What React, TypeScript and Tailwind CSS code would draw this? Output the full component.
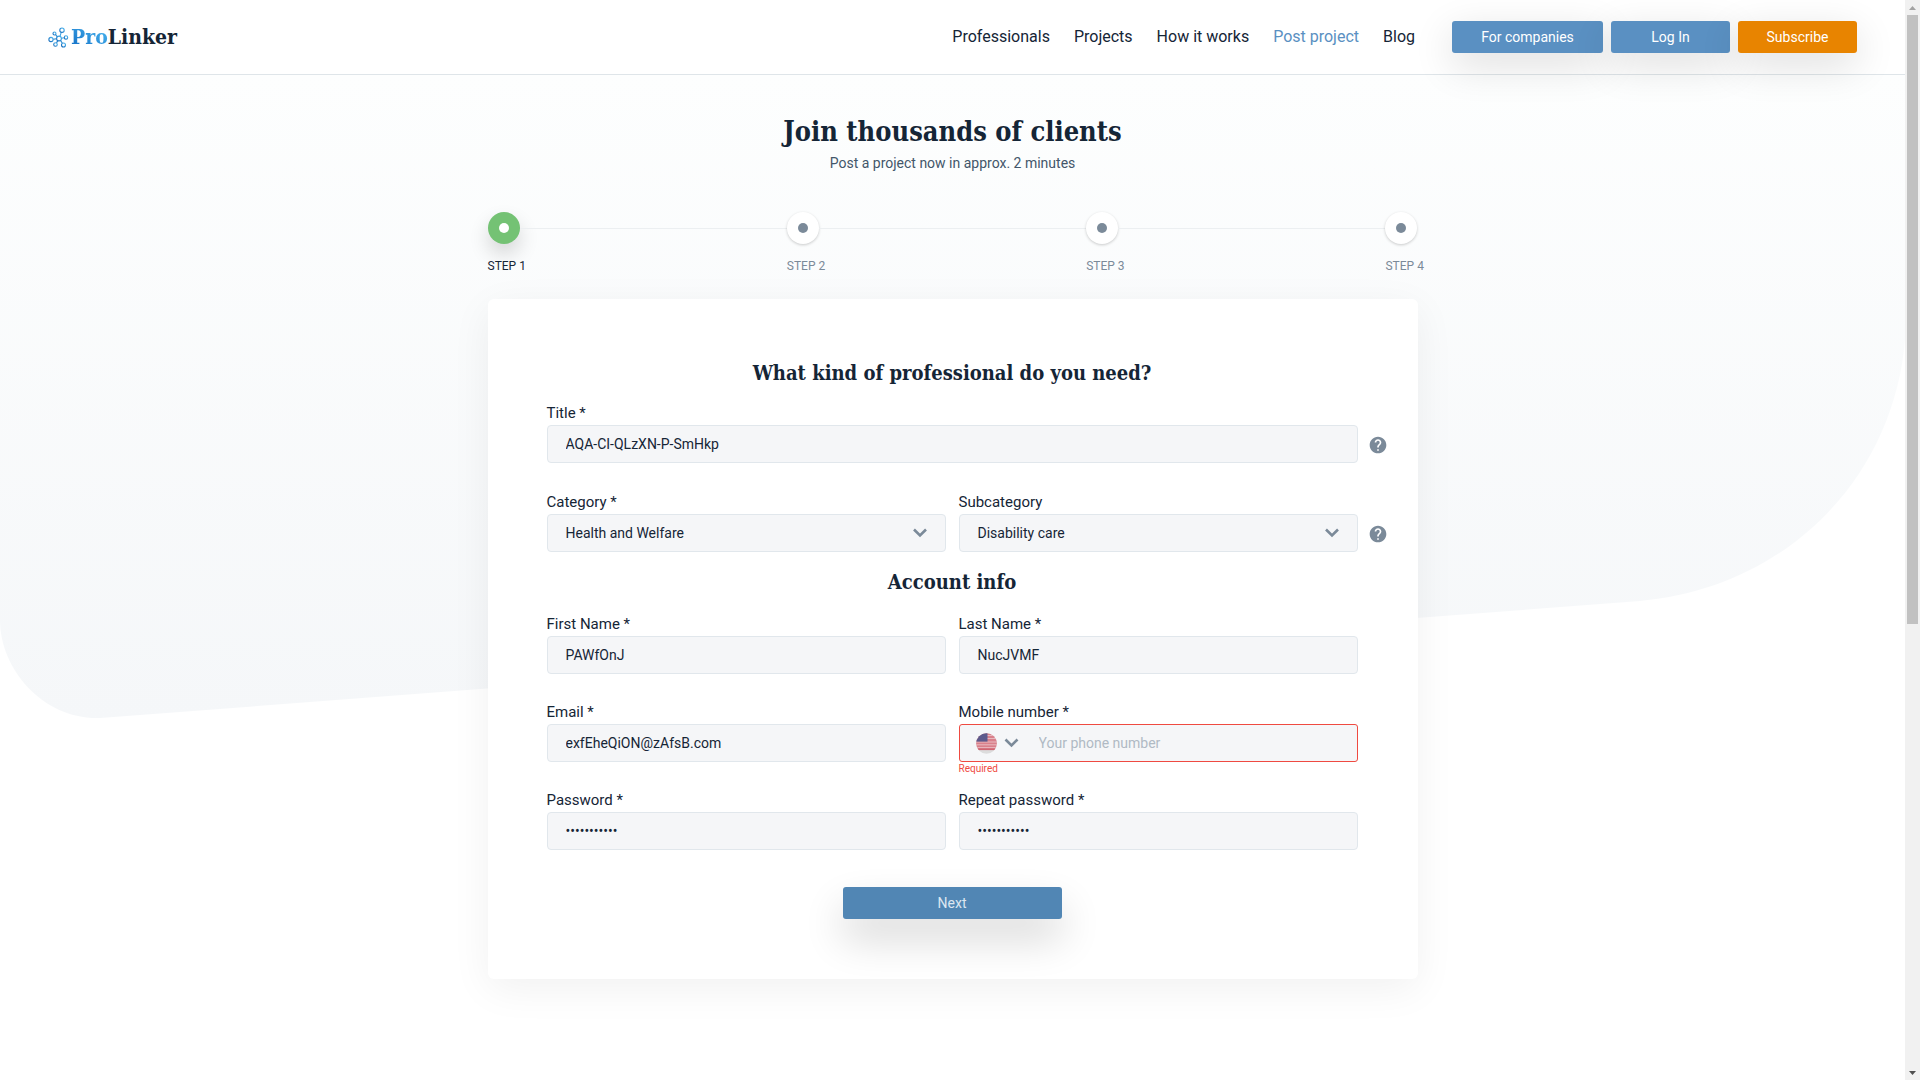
import { useState, type InputHTMLAttributes, type ReactNode } from "react";
import { MdHelp } from "react-icons/md";

const NAV_LINKS = ["Professionals", "Projects", "How it works", "Post project", "Blog"];
const ACTIVE_LINK = "Post project";
const STEPS = ["STEP 1", "STEP 2", "STEP 3", "STEP 4"];

function LogoMark() {
  const nodes = [
    [3, 12.5, 2.1],
    [6.5, 6.5, 1.5],
    [14, 3.2, 2.2],
    [18, 10.5, 1.7],
    [15.5, 18, 2],
    [7.5, 17.5, 1.8],
  ];
  return (
    <svg viewBox="0 0 21 21" className="h-[21px] w-[21px]" fill="none" aria-hidden="true">
      <defs>
        <linearGradient id="mark" x1="0" y1="1" x2="1" y2="0">
          <stop offset="0" stopColor="#1267b8" />
          <stop offset="1" stopColor="#4db8f2" />
        </linearGradient>
      </defs>
      <g stroke="url(#mark)" strokeWidth="1.1">
        <circle cx="11" cy="11.5" r="2.4" />
        <path d="M8.6 11.8 5.1 12.2M9.4 9.8 7.6 7.6M12 9.3 13.2 5.3M13.4 11.2 16.3 10.8M12.5 13.4 14.4 16.3M9.9 13.6 8.4 15.9" />
        {nodes.map(([cx, cy, r]) => (
          <circle key={`${cx}-${cy}`} cx={cx} cy={cy} r={r} />
        ))}
      </g>
    </svg>
  );
}

function Chevron({ className }: { className: string }) {
  return (
    <svg viewBox="0 0 14 10" className={className} fill="none" stroke="#7b8a99" strokeWidth="2.6" aria-hidden="true">
      <path d="M1 1.5 7 7.5 13 1.5" />
    </svg>
  );
}

function UsFlag() {
  return (
    <svg viewBox="0 0 21 21" className="h-[21px] w-[21px]" aria-hidden="true">
      <clipPath id="disc">
        <circle cx="10.5" cy="10.5" r="10.3" />
      </clipPath>
      <g clipPath="url(#disc)">
        <rect width="21" height="21" fill="#dcdcdc" />
        <rect width="21" height="17" fill="#d9808b" />
        <path d="M11 2.5H21M11 5.5H21M0 9H21M0 11.8H21M0 14.6H21" stroke="#e9b9c0" strokeWidth="1" />
        <rect y="15.5" width="21" height="1.6" fill="#cf6472" />
        <rect width="11.5" height="8.6" fill="#5d5a8c" />
      </g>
    </svg>
  );
}

function Field({ id, label, error, aside, children }: { id: string; label: string; error?: string; aside?: ReactNode; children: ReactNode }) {
  return (
    <div className="min-w-0 flex-1">
      <label htmlFor={id} className="block text-[15px] leading-6">
        {label}
      </label>
      <div className="relative">
        {children}
        {aside}
      </div>
      {error && (
        <p id={`${id}-error`} className="-mb-3.5 text-[10px] leading-3.5 text-[#ef4a41]">
          {error}
        </p>
      )}
    </div>
  );
}

const BOX = "block h-[38px] w-full rounded-[4px] border border-[#e1e7ec] bg-[#f5f6f8] px-[18px] text-sm text-[#152536] outline-none";

function TextField({ id, label, aside, ...rest }: { id: string; label: string; aside?: ReactNode } & InputHTMLAttributes<HTMLInputElement>) {
  return (
    <Field id={id} label={label} aside={aside}>
      <input id={id} className={BOX} {...rest} />
    </Field>
  );
}

function SelectField({ id, label, options, aside }: { id: string; label: string; options: string[]; aside?: ReactNode }) {
  return (
    <Field id={id} label={label} aside={aside}>
      <select id={id} className={`${BOX} appearance-none`}>
        {options.map((o) => (
          <option key={o}>{o}</option>
        ))}
      </select>
      <span className="pointer-events-none absolute inset-y-0 right-[19px] flex items-center">
        <Chevron className="h-[10px] w-[14px]" />
      </span>
    </Field>
  );
}

function Help({ label }: { label: string }) {
  return (
    <button type="button" aria-label={label} className="absolute top-2.5 -right-[30px] text-xl text-[#7b8a99]">
      <MdHelp />
    </button>
  );
}

function Header() {
  return (
    <header className="flex h-[75px] items-center justify-between border-b border-[#dfe5e9] px-12">
      <a href="#home" className="flex items-center gap-0.5 font-['Roboto_Slab','DejaVu_Serif_Condensed','DejaVu_Serif',serif] text-[21px] leading-7 font-bold text-[#152536]">
        <LogoMark />
        <span>
          <span className="bg-linear-to-tr from-[#0f6cc4] to-[#4fbdf3] bg-clip-text text-transparent">Pro</span>
          Linker
        </span>
      </a>
      <div className="flex items-center gap-[37px]">
        <nav className="flex gap-6 text-base">
          {NAV_LINKS.map((link) => (
            <a key={link} href="#nav" className={link === ACTIVE_LINK ? "text-[#5a90c2]" : ""}>
              {link}
            </a>
          ))}
        </nav>
        <div className="flex gap-2 text-sm text-white">
          <button className="h-8 w-[151px] rounded-[3px] bg-[#5a90c2] shadow-[0_12px_40px_rgba(0,0,0,0.14)]">For companies</button>
          <button className="h-8 w-[119px] rounded-[3px] bg-[#5a90c2] shadow-[0_12px_40px_rgba(0,0,0,0.14)]">Log In</button>
          <button className="h-8 w-[119px] rounded-[3px] bg-[#e88400] shadow-[0_12px_40px_rgba(0,0,0,0.14)]">Subscribe</button>
        </div>
      </div>
    </header>
  );
}

function Backdrop() {
  return (
    <svg viewBox="0 0 1905 650" preserveAspectRatio="none" className="absolute inset-x-0 top-[75px] -z-10 h-[650px] w-full" aria-hidden="true">
      <defs>
        <linearGradient id="fade" x1="0" y1="0" x2="0" y2="1">
          <stop offset="0" stopColor="#fdfefe" />
          <stop offset="1" stopColor="#f5f7f9" />
        </linearGradient>
      </defs>
      <path d="M0 0H1905V265C1893 405 1785 513 1640 526L100 643C44 645 0 595 0 545Z" fill="url(#fade)" />
    </svg>
  );
}

function Stepper() {
  return (
    <ol className="mt-[38px] flex">
      {STEPS.map((step, i) => (
        <li key={step} className={i === 0 ? "flex w-8" : "flex flex-1"}>
          {i > 0 && <span className="mt-4 h-px flex-1 bg-[#eceff1]" />}
          <div className="w-8">
            <span
              className={
                i === 0
                  ? "flex size-8 items-center justify-center rounded-full bg-[#74c274] shadow-[0_10px_20px_rgba(0,0,0,0.16)]"
                  : "flex size-8 items-center justify-center rounded-full bg-white shadow-[0_1px_3px_rgba(0,0,0,0.2)]"
              }
            >
              <span className={i === 0 ? "size-2.5 rounded-full bg-white" : "size-2.5 rounded-full bg-[#7b8a99]"} />
            </span>
            <span className={i === 0 ? "mt-3 block text-xs leading-5 whitespace-nowrap" : "mt-3 block text-xs leading-5 whitespace-nowrap text-[#7b8a99]"}>{step}</span>
          </div>
        </li>
      ))}
    </ol>
  );
}

function Scrollbar() {
  return (
    <aside className="flex h-screen w-[15px] flex-col items-center bg-[#f1f1f1]" aria-hidden="true">
      <svg viewBox="0 0 15 15" className="h-[15px] w-[15px] shrink-0">
        <path d="M4 10 7.5 6 11 10Z" fill="#a3a3a3" />
      </svg>
      <div className="min-h-0 w-full flex-1">
        <div className="mx-auto h-[58%] w-[11px] bg-[#c1c1c1]" />
      </div>
      <svg viewBox="0 0 15 15" className="h-[15px] w-[15px] shrink-0">
        <path d="M4 6 7.5 10 11 6Z" fill="#505050" />
      </svg>
    </aside>
  );
}

export default function App() {
  const [phone, setPhone] = useState("");
  return (
    <div className="flex bg-white font-[Roboto,sans-serif] text-[#152536]">
      <div className="relative isolate min-h-screen min-w-0 flex-1">
        <Backdrop />
        <Header />
        <main className="mx-auto max-w-[930px] pt-9 pb-[99px]">
          <h1 className="text-center font-['Roboto_Slab','DejaVu_Serif_Condensed','DejaVu_Serif',serif] text-[27px] leading-[42px] font-bold">Join thousands of clients</h1>
          <p className="text-center text-sm leading-[21px] text-[#43566a]">Post a project now in approx. 2 minutes</p>
          <Stepper />
          <form className="mt-[23px] rounded-md bg-white pt-[46px] pr-[60px] pb-[60px] pl-[59px] shadow-[0_10px_40px_rgba(0,0,0,0.06)]">
            <h2 className="text-center font-['Roboto_Slab','DejaVu_Serif_Condensed','DejaVu_Serif',serif] text-xl leading-14 font-bold">What kind of professional do you need?</h2>
            <div className="flex flex-col gap-[27px]">
              <TextField id="title" label="Title *" defaultValue="AQA-CI-QLzXN-P-SmHkp" aside={<Help label="Help with the title" />} />
              <div className="flex gap-[13px]">
                <SelectField id="category" label="Category *" options={["Health and Welfare"]} />
                <SelectField id="subcategory" label="Subcategory" options={["Disability care"]} aside={<Help label="Help with the category" />} />
              </div>
            </div>
            <h2 className="text-center font-['Roboto_Slab','DejaVu_Serif_Condensed','DejaVu_Serif',serif] text-xl leading-15 font-bold">Account info</h2>
            <div className="flex flex-col gap-[26px]">
              <div className="flex gap-[13px]">
                <TextField id="first" label="First Name *" defaultValue="PAWfOnJ" />
                <TextField id="last" label="Last Name *" defaultValue="NucJVMF" />
              </div>
              <div className="flex gap-[13px]">
                <TextField id="email" label="Email *" type="email" defaultValue="exfEheQiON@zAfsB.com" />
                <Field id="phone" label="Mobile number *" error="Required">
                  <div className="flex h-[38px] items-center rounded-[3px] border border-[#ef4a41] bg-[#f5f6f8] pl-4">
                    <button type="button" aria-label="Country: United States" className="flex items-center gap-[7px]">
                      <UsFlag />
                      <Chevron className="h-[10px] w-[15px]" />
                    </button>
                    <input
                      id="phone"
                      type="tel"
                      placeholder="Your phone number"
                      aria-describedby="phone-error"
                      value={phone}
                      onChange={(e) => setPhone(e.target.value)}
                      className="h-full min-w-0 flex-1 bg-transparent px-5 text-sm outline-none placeholder:text-[#b0bac4]"
                    />
                  </div>
                </Field>
              </div>
              <div className="flex gap-[13px]">
                <TextField id="password" label="Password *" type="password" defaultValue="password123" />
                <TextField id="repeat" label="Repeat password *" type="password" defaultValue="password123" />
              </div>
            </div>
            <button type="button" className="mx-auto mt-[37px] block h-8 w-[219px] rounded-[3px] bg-[#5186b4] text-sm text-[#dce7f1] shadow-[0_20px_40px_rgba(0,0,0,0.16)]">
              Next
            </button>
          </form>
        </main>
      </div>
      <Scrollbar />
    </div>
  );
}
